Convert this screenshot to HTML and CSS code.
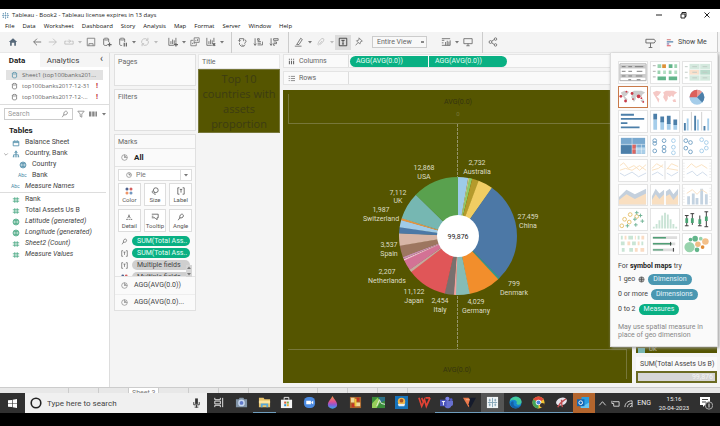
FILE: index.html
```html
<!DOCTYPE html>
<html lang="en">
<head>
<meta charset="utf-8">
<title>Tableau - Book2</title>
<link rel="stylesheet" href="styles.css">
</head>
<body>
<svg class="defs" aria-hidden="true">
  <symbol id="db" viewBox="0 0 10 10"><path d="M2 2.500C2 .8 8 .8 8 2.500V8C8 9.500 2 9.500 2 8ZM2 2.500C2 4 8 4 8 2.500"/></symbol>
  <symbol id="dbadd" viewBox="0 0 12 12"><path d="M2 2.500C2 1 8 1 8 2.500V6M2 2.500V9C2 10 4 10.500 6 10M2 2.500C2 4 8 4 8 2.500"/><path d="M9 6.500V11.500M6.500 9H11.500" stroke-width="1.500"/></symbol>
  <symbol id="dbpause" viewBox="0 0 12 12"><path d="M2 2.500C2 1 8 1 8 2.500V6M2 2.500V9C2 10 4 10.500 5 10M2 2.500C2 4 8 4 8 2.500"/><path d="M7.500 7V11.500M10 7V11.500" stroke-width="1.500"/></symbol>
  <symbol id="pie" viewBox="0 0 10 10"><circle cx="5" cy="5" r="4"/><path d="M5 1V5H9M5 5L7.500 2.500"/></symbol>
  <symbol id="T" viewBox="0 0 10 10"><path d="M3 1H1V9H3M7 1H9V9H7M3.500 3H6.500M5 3V7"/></symbol>
  <symbol id="angle" viewBox="0 0 10 10"><path d="M3.500 6.500C2.500 1 8 0 8 3.500C8 6 5 6.500 3.500 6L1.500 9"/></symbol>
  <symbol id="dots" viewBox="0 0 10 10"><g stroke="none"><circle cx="2.500" cy="2.500" r="1.900" fill="#4f628e"/><circle cx="7.500" cy="2.500" r="1.900" fill="#d4605f"/><circle cx="2.500" cy="7.500" r="1.900" fill="#ee9567"/><circle cx="7.500" cy="7.500" r="1.900" fill="#7196c0"/></g></symbol>
  <symbol id="hash" viewBox="0 0 10 10"><path d="M3.500 1.500V8.500M6.500 1.500V8.500M1 3.500H9M1 6.500H9"/></symbol>
  <symbol id="globe" viewBox="0 0 10 10"><circle cx="5" cy="5" r="3.700"/><path d="M1.500 5H8.500M5 1.500V8.500M2.500 3H7.500M2.500 7H7.500"/></symbol>
  <symbol id="caret" viewBox="0 0 6 6"><path d="M1 2H5L3 4.500Z" fill="currentColor" stroke="none"/></symbol>
  <symbol id="chart" viewBox="0 0 12 12"><path d="M1 1V10H7M3.500 5V8.500M5.500 3V8.500M7.500 4V8.500M9.500 1V6"/></symbol>
  <symbol id="map" viewBox="0 0 30 20"><path d="M2 5L6 3L11 4L8 8L6 9L8 11L9 12L8 16L6 12L3 7ZM13 5L16 3L24 3L28 5L25 7L24 10L22 8L20 10L18 8L18 12L16 15L13 10L14 7ZM23 13L26 12L27 15L24 15Z" stroke="none"/></symbol>
</svg>

<div class="letterbox top"></div>
<header class="titlebar">
  <svg class="ic logo" viewBox="0 0 10 10"><path d="M5 0V3M5 7V10M0 5H3M7 5H10M2 1.500V3.500M8 1.500V3.500M2 6.500V8.500M8 6.500V8.500M1 2.500H3M7 2.500H9M1 7.500H3M7 7.500H9M3.500 5H6.500M5 3.500V6.500"/></svg>
  <h1>Tableau - Book2 - Tableau license expires in 13 days</h1>
  <div class="winbtns">
    <button aria-label="Minimize"><svg class="ic" viewBox="0 0 8 8"><path d="M1 4H7"/></svg></button>
    <button aria-label="Restore"><svg class="ic" viewBox="0 0 8 8"><path d="M2 3H6V7H2ZM3 3V1.500H7V5.500H6"/></svg></button>
    <button aria-label="Close"><svg class="ic" viewBox="0 0 8 8"><path d="M1.500 1.500L6.500 6.500M6.500 1.500L1.500 6.500"/></svg></button>
  </div>
</header>
<nav class="menu">
  <a href="#">File</a><a href="#">Data</a><a href="#">Worksheet</a><a href="#">Dashboard</a><a href="#">Story</a><a href="#">Analysis</a><a href="#">Map</a><a href="#">Format</a><a href="#">Server</a><a href="#">Window</a><a href="#">Help</a>
</nav>

<div class="toolbar">
  <div class="group first">
    <button aria-label="Home"><svg class="ic home" viewBox="0 0 12 12"><path d="M1 6L6 1.500L11 6H9.500V10.500H7.500V7H4.500V10.500H2.500V6Z"/></svg></button>
  </div>
  <div class="group">
    <button aria-label="Undo"><svg class="ic dark" viewBox="0 0 12 12"><path d="M11 6H2M6 2L2 6L6 10"/></svg></button>
    <button aria-label="Redo"><svg class="ic faint" viewBox="0 0 12 12"><path d="M1 6H10M6 2L10 6L6 10"/></svg></button>
    <button aria-label="Replay"><svg class="ic faint" viewBox="0 0 12 12"><path d="M3 5H1V8.500H11V5H9M4 5H8M6 3L8 5L6 7"/></svg></button>
    <svg class="caret faint"><use href="#caret"/></svg>
    <button aria-label="Save"><svg class="ic" viewBox="0 0 12 12"><path d="M1.500 1.500H10.500V10.500H1.500ZM3.500 10.500V8H8.500V10.500"/></svg></button>
    <button aria-label="New data source"><svg class="ic dark"><use href="#dbadd"/></svg></button>
    <button aria-label="Pause updates"><svg class="ic dark"><use href="#dbpause"/></svg></button>
    <svg class="caret"><use href="#caret"/></svg>
    <button aria-label="Refresh"><svg class="ic faint" viewBox="0 0 12 12"><path d="M2 7A4 4 0 0 1 9 3.500M10 5A4 4 0 0 1 3 8.500M9.500 1V4H7M2.500 11V8H5"/></svg></button>
    <svg class="caret faint"><use href="#caret"/></svg>
  </div>
  <div class="group">
    <button aria-label="New worksheet"><svg class="ic dark" viewBox="0 0 12 12"><use href="#chart" width="12" height="12"/><path d="M9.500 6.500V11.500M7 9H12" stroke-width="1.500"/></svg></button>
    <svg class="caret"><use href="#caret"/></svg>
    <button aria-label="Duplicate"><svg class="ic" viewBox="0 0 12 12"><path d="M5 1H11V6.500H5ZM4 4H1V10.500H7.500V7.500M3 8.500V7M5 8.500V6M7 5V3.500M9 5V2.500"/></svg></button>
    <button aria-label="Clear sheet"><svg class="ic dark" viewBox="0 0 12 12"><use href="#chart" width="12" height="12"/><path d="M8 7.500L11 10.500M11 7.500L8 10.500" stroke-width="1.500"/></svg></button>
    <svg class="caret"><use href="#caret"/></svg>
  </div>
  <div class="group ruled">
    <button aria-label="Swap"><svg class="ic dark" viewBox="0 0 12 12"><path d="M3 2H8V5M3 2V5M1.500 4L3 5.500L4.500 4M9.500 3L11 5L9 8M3 7V9L5 11H8L10 9M6 9L8 11"/></svg></button>
    <button aria-label="Sort ascending"><svg class="ic dark" viewBox="0 0 12 12"><path d="M2.500 1.500V10M1 8L2.500 10L4 8M5.500 2H7.500V4H5.500ZM5.500 5.500H9.500M5.500 7.500H9.500M5.500 9.500H11.500V5.500"/></svg></button>
    <button aria-label="Sort descending"><svg class="ic dark" viewBox="0 0 12 12"><path d="M2.500 1.500V10M1 8L2.500 10L4 8M5.500 2H11V4H5.500ZM5.500 6H9V8H5.500V10H7"/></svg></button>
  </div>
  <div class="group ruled">
    <button aria-label="Highlight"><svg class="ic dark" viewBox="0 0 12 12"><path d="M1 11H9M4 8L8 1.500L10 3L6 9H4ZM3 9.500L4 8"/></svg></button>
    <svg class="caret"><use href="#caret"/></svg>
    <button aria-label="Group"><svg class="ic faint" viewBox="0 0 12 12"><path d="M3 10C1 8 5 3 7 2C10 1 10 4 8 6L5 9C4 9 4 8 7 5"/></svg></button>
    <svg class="caret faint"><use href="#caret"/></svg>
    <button class="on" aria-label="Show labels"><svg class="ic" viewBox="0 0 12 12"><path d="M1.500 1.500H10.500V10.500H1.500ZM4 4H8M6 4V8.500M5 8.500H7"/></svg></button>
    <button aria-label="Fix axes"><svg class="ic" viewBox="0 0 12 12"><path d="M6 1L10 5L8 5.500L7 8.500L3 4.500L6 3.500ZM5 6.500L2 10"/></svg></button>
  </div>
  <select class="fit" aria-label="Fit"><option>Entire View</option></select>
  <div class="group">
    <button aria-label="Show cards"><svg class="ic dark" viewBox="0 0 12 12"><path d="M1 2H11M1 4H4M1 7H3M1 10H11V4M5.500 10V6M7.500 10V4.500M9.500 10V5.500"/></svg></button>
    <svg class="caret"><use href="#caret"/></svg>
    <button aria-label="Presentation mode"><svg class="ic dark" viewBox="0 0 12 12"><path d="M1 2H11V8H1ZM6 8V10.500M4 10.500H8"/></svg></button>
  </div>
  <div class="group ruled">
    <button aria-label="Share"><svg class="ic dark" viewBox="0 0 12 12"><circle cx="3" cy="6" r="1.700"/><circle cx="9" cy="2.500" r="1.500"/><circle cx="9" cy="9.500" r="1.500"/><path d="M4.500 5L7.500 3M4.500 7L7.500 9"/></svg></button>
  </div>
  <button class="guide" aria-label="Data guide"><svg class="ic dark" viewBox="0 0 12 12"><path d="M1 2.500H10L11.500 4.500L10 6.500H1ZM6 6.500V11.500M4 11.500H8"/></svg></button>
  <button class="showme-tab"><svg class="bars" viewBox="0 0 10 10"><path d="M1 1.500H6" stroke="#d98a8a"/><path d="M1 4.200H9" stroke="#4c7ea8"/><path d="M1 6.800H4" stroke="#8b74a8"/><path d="M1 9H6" stroke="#e07078"/></svg>Show Me</button>
</div>

<main class="work">
  <aside class="data">
    <div class="tabs"><button class="active">Data</button><button>Analytics</button><span>‹</span></div>
    <ul class="sources">
      <li class="sel"><svg class="ic blue"><use href="#db"/></svg><span>Sheet1 (top100banks201...</span></li>
      <li><svg class="ic"><use href="#db"/></svg><span>top100banks2017-12-31</span><b>!</b></li>
      <li><svg class="ic"><use href="#db"/></svg><span>top100banks2017-12-...</span><b>!</b></li>
    </ul>
    <div class="search">
      <label><input type="text" placeholder="Search" aria-label="Search"><svg class="ic"><use href="#angle"/></svg></label>
      <svg class="ic" viewBox="0 0 10 10"><path d="M1 1.500H9L6 5V9L4 8V5Z"/></svg>
      <svg class="ic grid" viewBox="0 0 10 10"><path d="M0 3.500H10M0 6.500H10"/></svg>
      <svg class="caret"><use href="#caret"/></svg>
    </div>
    <h2>Tables</h2>
    <ul class="fields blue">
      <li><svg class="ic" viewBox="0 0 10 10"><path d="M1.500 3H8.500V8.500H1.500ZM1.500 4.500H8.500M3.500 1.500V3M6.500 1.500V3"/></svg>Balance Sheet</li>
      <li class="open"><svg class="ic chev" viewBox="0 0 10 10"><path d="M2 4L5 7L8 4"/></svg><svg class="ic" viewBox="0 0 10 10"><path d="M5 1L6.500 3.500H3.500ZM5 3.500V6M2 8.500V6H8V8.500M1 8.500H3M4 8.500H6M7 8.500H9M5 6V8"/></svg>Country, Bank</li>
      <li class="child"><svg class="ic"><use href="#globe"/></svg>Country</li>
      <li class="child"><em>Abc</em>Bank</li>
      <li class="it"><em>Abc</em>Measure Names</li>
    </ul>
    <ul class="fields green">
      <li><svg class="ic"><use href="#hash"/></svg>Rank</li>
      <li><svg class="ic"><use href="#hash"/></svg>Total Assets Us B</li>
      <li class="it"><svg class="ic"><use href="#globe"/></svg>Latitude (generated)</li>
      <li class="it"><svg class="ic"><use href="#globe"/></svg>Longitude (generated)</li>
      <li class="it"><svg class="ic"><use href="#hash"/></svg>Sheet2 (Count)</li>
      <li class="it"><svg class="ic"><use href="#hash"/></svg>Measure Values</li>
    </ul>
  </aside>

  <section class="cards">
    <div class="card pages"><h3>Pages</h3></div>
    <div class="card filters"><h3>Filters</h3></div>
    <div class="card marks">
      <h3>Marks</h3>
      <div class="all"><svg class="ic"><use href="#pie"/></svg>All</div>
      <div class="type"><svg class="ic"><use href="#pie"/></svg><select aria-label="Mark type"><option>Pie</option></select><svg class="caret"><use href="#caret"/></svg></div>
      <div class="props">
        <button><svg class="ic"><use href="#dots"/></svg>Color</button>
        <button><svg class="ic" viewBox="0 0 10 10"><circle cx="6" cy="4" r="3"/><path d="M3 4C0 6 2 9 5 7M4 9H6"/></svg>Size</button>
        <button><svg class="ic"><use href="#T"/></svg>Label</button>
        <button><svg class="ic" viewBox="0 0 10 10"><path d="M5 2V4M4 4H6M1.500 8H3.500M4.500 8H6M7 8H9M3 6L5 4.500L7 6"/></svg>Detail</button>
        <button><svg class="ic" viewBox="0 0 10 10"><path d="M1 1.500H9V6H7.500V8.500L5 6H1M1 4H3"/></svg>Tooltip</button>
        <button><svg class="ic"><use href="#angle"/></svg>Angle</button>
      </div>
      <ul class="pills">
        <li><svg class="ic"><use href="#angle"/></svg><span>SUM(Total Ass..</span></li>
        <li><svg class="ic"><use href="#T"/></svg><span>SUM(Total Ass..</span></li>
        <li class="gray"><svg class="ic"><use href="#T"/></svg><span>Multiple fields</span></li>
        <li class="gray"><svg class="ic"><use href="#dots"/></svg><span>Multiple fields</span></li>
      </ul>
      <div class="agg"><svg class="ic"><use href="#pie"/></svg>AGG(AVG(0.0))</div>
      <div class="agg"><svg class="ic"><use href="#pie"/></svg>AGG(AVG(0.0)...</div>
      <div class="spin"><svg class="caret up"><use href="#caret"/></svg><svg class="caret"><use href="#caret"/></svg></div>
    </div>
  </section>

  <section class="title-card">
    <h3>Title</h3>
    <p>Top 10<br>countries with<br>assets<br>proportion</p>
  </section>

  <section class="view">
    <div class="shelf"><h3><svg class="ic" viewBox="0 0 10 10"><path d="M2 1V2.500M5 1V2.500M8 1V2.500M2 4V9M5 4V9M8 4V9" stroke-width="1.500"/></svg>Columns</h3><span class="pill round">AGG(AVG(0.0))</span><span class="pill end">AGG(AVG(0.0))</span></div>
    <div class="shelf"><h3><svg class="ic" viewBox="0 0 10 10"><path d="M1 2H2.500M1 5H2.500M1 8H2.500M4 2H10M4 5H10M4 8H10"/></svg>Rows</h3></div>
    <div class="viz">
      <div class="axis"><span>AVG(0.0)</span><small>0</small></div>
      <div class="plot">
        <svg viewBox="0 0 220 225" role="img" aria-label="Total assets by country">
          <g class="slices">
            <circle cx="110" cy="112" r="29.500" pathLength="360" stroke="#9dcbe8" stroke-dasharray="10 360"/>
            <circle cx="110" cy="112" r="29.500" pathLength="360" stroke="#d7c78b" stroke-dasharray="1.500 360" stroke-dashoffset="-10"/>
            <circle cx="110" cy="112" r="29.500" pathLength="360" stroke="#8fcb68" stroke-dasharray="3 360" stroke-dashoffset="-11"/>
            <circle cx="110" cy="112" r="29.500" pathLength="360" stroke="#b49a2c" stroke-dasharray="7 360" stroke-dashoffset="-14"/>
            <circle cx="110" cy="112" r="29.500" pathLength="360" stroke="#f0cd63" stroke-dasharray="15 360" stroke-dashoffset="-20.500"/>
            <circle cx="110" cy="112" r="29.500" pathLength="360" stroke="#4c78a6" stroke-dasharray="100.500 360" stroke-dashoffset="-35"/>
            <circle cx="110" cy="112" r="29.500" pathLength="360" stroke="#35968b" stroke-dasharray="2.500 360" stroke-dashoffset="-135"/>
            <circle cx="110" cy="112" r="29.500" pathLength="360" stroke="#f28e2c" stroke-dasharray="32 360" stroke-dashoffset="-137"/>
            <circle cx="110" cy="112" r="29.500" pathLength="360" stroke="#86bcb6" stroke-dasharray="14 360" stroke-dashoffset="-168.500"/>
            <circle cx="110" cy="112" r="29.500" pathLength="360" stroke="#f2a09c" stroke-dasharray="2.500 360" stroke-dashoffset="-182"/>
            <circle cx="110" cy="112" r="29.500" pathLength="360" stroke="#79706e" stroke-dasharray="9.500 360" stroke-dashoffset="-184"/>
            <circle cx="110" cy="112" r="29.500" pathLength="360" stroke="#e05658" stroke-dasharray="40 360" stroke-dashoffset="-193"/>
            <circle cx="110" cy="112" r="29.500" pathLength="360" stroke="#c6a99d" stroke-dasharray="3 360" stroke-dashoffset="-232.500"/>
            <circle cx="110" cy="112" r="29.500" pathLength="360" stroke="#d37295" stroke-dasharray="11 360" stroke-dashoffset="-235"/>
            <circle cx="110" cy="112" r="29.500" pathLength="360" stroke="#f3bfd2" stroke-dasharray="1.500 360" stroke-dashoffset="-245.500"/>
            <circle cx="110" cy="112" r="29.500" pathLength="360" stroke="#c98fb4" stroke-dasharray="2.500 360" stroke-dashoffset="-247"/>
            <circle cx="110" cy="112" r="29.500" pathLength="360" stroke="#9d7660" stroke-dasharray="12 360" stroke-dashoffset="-249"/>
            <circle cx="110" cy="112" r="29.500" pathLength="360" stroke="#d7b5a6" stroke-dasharray="12.500 360" stroke-dashoffset="-260.500"/>
            <circle cx="110" cy="112" r="29.500" pathLength="360" stroke="#4c78a6" stroke-dasharray="6.500 360" stroke-dashoffset="-272.500"/>
            <circle cx="110" cy="112" r="29.500" pathLength="360" stroke="#a0cbe8" stroke-dasharray="7.500 360" stroke-dashoffset="-278.500"/>
            <circle cx="110" cy="112" r="29.500" pathLength="360" stroke="#e49440" stroke-dasharray="2.500 360" stroke-dashoffset="-285.500"/>
            <circle cx="110" cy="112" r="29.500" pathLength="360" stroke="#76b7b2" stroke-dasharray="27 360" stroke-dashoffset="-287.500"/>
            <circle cx="110" cy="112" r="29.500" pathLength="360" stroke="#59a14e" stroke-dasharray="45.700 360" stroke-dashoffset="-314.300"/>
          </g>
          <circle cx="110" cy="112" r="21" fill="#fff"/>
          <g class="labels">
            <text x="76" y="46">12,868</text><text x="76" y="55">USA</text>
            <text x="129" y="41">2,732</text><text x="129" y="50">Australia</text>
            <text x="50" y="71">7,112</text><text x="50" y="79">UK</text>
            <text x="33" y="88">1,987</text><text x="33" y="97">Switzerland</text>
            <text x="41" y="123">3,537</text><text x="41" y="132">Spain</text>
            <text x="39" y="150">2,207</text><text x="39" y="159">Netherlands</text>
            <text x="66" y="170">11,122</text><text x="66" y="179">Japan</text>
            <text x="92" y="179">2,454</text><text x="92" y="188">Italy</text>
            <text x="128" y="180">4,029</text><text x="128" y="189">Germany</text>
            <text x="166" y="162">799</text><text x="166" y="171">Denmark</text>
            <text x="180" y="95">27,459</text><text x="180" y="104">China</text>
            <text class="total" x="110" y="115">99,876</text>
          </g>
        </svg>
      </div>
      <div class="axis low"><span>AVG(0.0)</span></div>
    </div>
  </section>

  <aside class="legend">
    <div class="keys"><span></span>UK</div>
    <div class="sum"><h3>SUM(Total Assets Us B)</h3><div>99,876</div></div>
  </aside>

  <section class="showme">
    <div class="thumbs">
      <button aria-label="Text table"><svg viewBox="0 0 30 20"><path d="M1 1H29V19H1Z" fill="#fff" stroke="#aaa"/><path d="M1 4H29M1 14H29" stroke="#ccc" stroke-width="4"/><path d="M3 4H7M10 4H14M17 4H26M3 9H7M10 9H14M19 9H25M3 14H7M10 14H14M18 14H25M10 18H13M19 18H23" stroke="#777"/></svg></button>
      <button aria-label="Heat map"><svg viewBox="0 0 30 20"><path d="M2 3H5M2 9H5M2 15H5" stroke="#aaa"/><path d="M7 3.500H11M25 3.500H28M19 10H22M7 10H10" stroke="#9bd3b0" stroke-width="4"/><path d="M12 3.500H16" stroke="#dd9138" stroke-width="4"/><path d="M19 3.500H23M7 16.500H16M19 16.500H28" stroke="#62b58a" stroke-width="4"/><path d="M13 10H16M25 10H28" stroke="#b4dfc4" stroke-width="4"/></svg></button>
      <button aria-label="Highlight table"><svg viewBox="0 0 30 20"><path d="M7 1H29V19H7Z" fill="#d4e9de"/><path d="M7 7H17V13H7Z" fill="#fae0cb"/><path d="M18 7H29V13H18Z" fill="#b9dbcc"/><path d="M7 7H29M7 13H29M18 1V19" stroke="#eef6f2"/><path d="M2 4H5M2 10H5M2 16H5M10 4H15M21 4H26M10 10H15M21 10H26M10 16H15M21 16H26" stroke="#bfcac4"/></svg></button>
      <button class="picked" aria-label="Symbol map"><svg viewBox="0 0 30 20"><use href="#map" fill="#ccc"/><g fill="#c93b49"><circle cx="2" cy="9" r="1.500"/><circle cx="8" cy="4" r="1"/><circle cx="7" cy="14" r="1.500"/><circle cx="14" cy="6" r="1.500"/><circle cx="21" cy="9" r="2"/><circle cx="24" cy="11" r="1"/><circle cx="26" cy="15" r="1"/><circle cx="15" cy="12" r="1"/></g></svg></button>
      <button aria-label="Map"><svg viewBox="0 0 30 20"><use href="#map" fill="#f5c8c5"/></svg></button>
      <button aria-label="Pie chart"><svg viewBox="0 0 30 20"><circle cx="15" cy="10" r="8" fill="#a5cdea"/><path d="M15 10V2A8 8 0 0 1 20.600 4.400Z" fill="#ed9690"/><path d="M15 10L20.600 4.400A8 8 0 0 1 20.600 15.600Z" fill="#4c7fa9"/><path d="M15 10V2A8 8 0 0 0 7 10Z" fill="#dc605b"/></svg></button>
      <button aria-label="Horizontal bars"><svg viewBox="0 0 30 20"><path d="M2 3H16M2 7.500H27M2 12H9M2 16.500H22" stroke="#4c7fa9" stroke-width="2"/></svg></button>
      <button aria-label="Stacked bars"><svg viewBox="0 0 30 20"><path d="M4.500 8V19M12 10V19M19 12V19M26 14V19" stroke="#a5cdea" stroke-width="4"/><path d="M4.500 2V8M12 5V11M19 4V13M26 8V14" stroke="#4c7fa9" stroke-width="4"/></svg></button>
      <button aria-label="Side-by-side bars"><svg viewBox="0 0 30 20"><path d="M9 0V20M20 0V20" stroke="#ccc"/><path d="M2 12V20M13 4V20M23 15V20" stroke="#4c7fa9" stroke-width="2"/><path d="M5 7V20M16 8V20M27 7V20" stroke="#a5cdea" stroke-width="2"/></svg></button>
      <button aria-label="Treemap"><svg viewBox="0 0 30 20"><path d="M2 1H28V18H2Z" fill="#79a9cf"/><path d="M2 9H14V18H2Z" fill="#4c7fa9"/><path d="M14 8H18V18H14Z" fill="#dd655f"/><path d="M18 11H28V18H18Z" fill="#a9cee8"/><path d="M2 8H28M14 1V18M19 8V18M24 8V18M14 13H28" stroke="#fff" stroke-width=".5"/></svg></button>
      <button aria-label="Circle views"><svg viewBox="0 0 30 20" fill="none" stroke="#719fc3"><circle cx="4" cy="4" r="2"/><circle cx="4" cy="7" r="2"/><circle cx="4" cy="15" r="2"/><circle cx="14" cy="4" r="2"/><circle cx="14" cy="11" r="2"/><circle cx="14" cy="15" r="2"/><g stroke="#a5cdea"><circle cx="24" cy="4" r="2"/><circle cx="24" cy="11" r="2"/><circle cx="24" cy="17" r="2"/></g></svg></button>
      <button aria-label="Side-by-side circles"><svg viewBox="0 0 30 20" fill="none" stroke="#719fc3"><circle cx="3" cy="4" r="2"/><circle cx="3" cy="12" r="2"/><circle cx="8" cy="6" r="2"/><circle cx="8" cy="16" r="2"/><g stroke="#a5cdea"><circle cx="20" cy="3" r="2"/><circle cx="25" cy="6" r="2"/><circle cx="20" cy="15" r="2"/><circle cx="25" cy="12" r="2"/></g></svg></button>
      <button aria-label="Continuous lines"><svg viewBox="0 0 30 20" fill="none"><path d="M1 5L5 2L10 8L16 5L22 10L29 4M1 10L7 8L14 10L22 5L29 10" stroke="#fae0bd"/><path d="M1 13L6 16L14 12L21 17L29 13" stroke="#cfdaea"/></svg></button>
      <button aria-label="Discrete lines"><svg viewBox="0 0 30 20" fill="none"><path d="M15 0V20" stroke="#ddd"/><path d="M1 8L6 3L13 7M17 9L22 3L29 6M1 10L8 8L13 4M17 8L29 10" stroke="#fae0bd"/><path d="M1 15L7 12L13 16M17 13L22 16L29 12" stroke="#cfdaea"/></svg></button>
      <button aria-label="Dual lines"><svg viewBox="0 0 30 20" fill="none"><path d="M4 8L9 3L14 7L20 4L26 8" stroke="#fae0bd"/><path d="M4 14L10 11L15 16L21 12L26 16" stroke="#cfdaea"/><path d="M1 2V19M29 2V19" stroke="#ddd" stroke-dasharray="1 2"/></svg></button>
      <button aria-label="Continuous area"><svg viewBox="0 0 30 20"><path d="M0 12L8 4L17 9L29 3V20H0Z" fill="#c4d0dd"/><path d="M0 15L8 9L17 14L29 8V20H0Z" fill="#f9dfc1"/></svg></button>
      <button aria-label="Discrete area"><svg viewBox="0 0 30 20"><path d="M1 11L5 3L9 8L14 4V20H1ZM16 6L20 3L24 9L29 3V20H16Z" fill="#c4d0dd"/><path d="M1 15L5 9L9 14L14 9V20H1ZM16 11L20 9L24 15L29 9V20H16Z" fill="#f9dfc1"/></svg></button>
      <button aria-label="Dual combination"><svg viewBox="0 0 30 20" fill="none"><path d="M6 11V20M11 8V20M15 13V20M20 3V20M25 9V20" stroke="#c4d3e1" stroke-width="3"/><path d="M4 8L10 4L15 9L20 4L26 8" stroke="#f9dfc1"/><path d="M1 2V19M29 2V19" stroke="#ddd" stroke-dasharray="1 2"/></svg></button>
      <button aria-label="Scatter plot"><svg viewBox="0 0 30 20" fill="none"><g stroke="#e6c06a"><circle cx="3" cy="17" r="2"/><circle cx="6" cy="10" r="2"/><circle cx="11" cy="13" r="2"/><circle cx="12" cy="5" r="2"/><circle cx="19" cy="7" r="2"/></g><path d="M19 1V5M17 3H21M17 8V12M15 10H19M25 10V14M23 12H27M9 15V19M7 17H11M18 14V18M16 16H20M23 4V8M21 6H25" stroke="#6fb395"/></svg></button>
      <button aria-label="Histogram"><svg viewBox="0 0 30 20"><path d="M3 18V20M6 15V20M9 11V20M12 6V20M15 3V20M18 5V20M21 10V20M24 15V20M27 18V20" stroke="#c9e3d5" stroke-width="2"/></svg></button>
      <button aria-label="Box plot"><svg viewBox="0 0 30 20"><path d="M4 6V17M10 4V16M18 6V17M25 2V18M2 6H6M2 17H6M8 4H12M16 17H20M23 2H27M23 18H27" stroke="#333"/><path d="M4 9V14M10 9V14M18 10V15M25 7V12" stroke="#4aa373" stroke-width="3"/></svg></button>
      <button aria-label="Gantt"><svg viewBox="0 0 30 20"><path d="M2 3H4M10 3H15M20 3H22M2 9H6M14 9H18M24 9H26M3 16H6M11 16H15" stroke="#c9e5d5" stroke-width="4"/><path d="M6 3H8M17 3H18M24 3H27M9 9H12M20 9H22M17 16H20M23 16H27" stroke="#fadcc4" stroke-width="4"/></svg></button>
      <button aria-label="Bullet graph"><svg viewBox="0 0 30 20"><path d="M2 3H28M2 9.500H26M2 16H25" stroke="#ddd" stroke-width="3"/><path d="M2 3H16M2 9.500H22M2 16H13" stroke="#4f9e75" stroke-width="1.500"/><path d="M21 7.500V11.500M24 14V18" stroke="#333"/></svg></button>
      <button aria-label="Packed bubbles"><svg viewBox="0 0 30 20"><circle cx="7" cy="13" r="5.500" fill="#98d3ad"/><circle cx="13" cy="4" r="3" fill="#62b58a"/><circle cx="8" cy="5" r="2" fill="#62b58a"/><circle cx="16" cy="10" r="3" fill="#f0bd85"/><circle cx="24" cy="7" r="3.500" fill="#f3c08a"/><circle cx="15" cy="16" r="2.500" fill="#62b58a"/><circle cx="21" cy="13" r="2" fill="#e28c36"/><circle cx="19" cy="4" r="2" fill="#98d3ad"/></svg></button>
    </div>
    <p class="try">For <b>symbol maps</b> try</p>
    <p class="need">1 geo <svg class="ic"><use href="#globe"/></svg><span class="dim">Dimension</span></p>
    <p class="need">0 or more <span class="dim">Dimensions</span></p>
    <p class="need">0 to 2 <span class="dim mea">Measures</span></p>
    <p class="note">May use spatial measure in<br>place of geo dimension</p>
  </section>
</main>

<div class="sheets"><span class="wide"></span><span></span><span></span><span class="cur">Sheet 3</span><span></span><span></span><span></span><span class="wide"></span><span></span><span></span><span></span></div>

<footer class="taskbar">
  <button class="start" aria-label="Start"><svg viewBox="0 0 10 10"><path d="M0 1.500L4.500 1V4.600H0ZM5.200 .9L10 0V4.600H5.200ZM0 5.400H4.500V9L0 8.500ZM5.200 5.400H10V10L5.200 9.100Z" fill="#fff"/></svg></button>
  <label class="find"><svg viewBox="0 0 12 12"><circle cx="6" cy="6" r="4.800" fill="none" stroke="#222" stroke-width="1.600"/></svg><input type="text" placeholder="Type here to search" aria-label="Type here to search"><svg class="mic" viewBox="0 0 12 12"><path d="M4.500 1H7.500V7H4.500Z" fill="#333"/><path d="M3 5V8H9V5M6 8V11M4 10.500H8" fill="none" stroke="#333"/></svg></label>
  <div class="apps">
    <button aria-label="Task view"><svg viewBox="0 0 14 14"><path d="M3 2V4H9V2M3 12V10H9V12M3 5.500H9V8.500H3ZM11.500 2V12" fill="none" stroke="#eee"/></svg></button>
    <button aria-label="Camera"><svg viewBox="0 0 14 14"><path d="M1 3.500H4L5 2H9L10 3.500H13V12H1Z" fill="#8193a6"/><circle cx="7" cy="7.500" r="3.600" fill="#c6d7ef"/><circle cx="7" cy="7.500" r="2" fill="#6079ca"/></svg></button>
    <button class="run" aria-label="Explorer"><svg viewBox="0 0 14 14"><path d="M1 2H6L7 3.500H13V12H1Z" fill="#e9c46b"/><path d="M1 5H13V8H1Z" fill="#fbe5a0"/><path d="M3 12V8H11V12H9V10H5V12Z" fill="#57a7d8"/></svg></button>
    <button aria-label="Store"><svg viewBox="0 0 14 14"><path d="M1 4H13V13H1Z" fill="#f4f4f4"/><path d="M4.500 4V1.500H9.500V4" fill="none" stroke="#eee"/><path d="M4.500 6H6.700V8.200H4.500Z" fill="#d75a38"/><path d="M7.300 6H9.500V8.200H7.300Z" fill="#79ad43"/><path d="M4.500 8.800H6.700V11H4.500Z" fill="#2c98cf"/><path d="M7.300 8.800H9.500V11H7.300Z" fill="#e7ae36"/></svg></button>
    <button aria-label="Zoom"><svg viewBox="0 0 14 14"><rect x="1" y="1" width="12" height="12" rx="5" fill="#4b8ae0"/><path d="M3.500 5H8.500V9H3.500ZM9 6.500L11 5V9L9 7.500Z" fill="#fff"/></svg></button>
    <button aria-label="Paint"><svg viewBox="0 0 14 14"><defs><linearGradient id="drop" x1="0" y1="0" x2="0" y2="1"><stop offset="0" stop-color="#f09a46"/><stop offset=".45" stop-color="#dd4f92"/><stop offset=".7" stop-color="#875bd6"/><stop offset="1" stop-color="#38a6e8"/></linearGradient></defs><path d="M7 0C9 4 12 6 12 9.500C12 15 2 15 2 9.500C2 6 5 4 7 0Z" fill="url(#drop)"/></svg></button>
    <button aria-label="Game"><svg viewBox="0 0 14 14"><path d="M1 1H13V13H1Z" fill="#a9652c"/><path d="M2 2H6V7H2ZM7 7H12V11H7Z" fill="#eed79a"/><path d="M8 2H11V6H8ZM3 8H6V12H3Z" fill="#c33325"/><path d="M6 3H8V11H6Z" fill="#f2c636"/></svg></button>
    <button aria-label="Photos"><svg viewBox="0 0 14 14"><path d="M0 1H14V13H0Z" fill="#3b8d3b"/><path d="M0 8L6 2L9 6L5 13H0Z" fill="#97cf5a"/><path d="M7 1H14V5L9 7Z" fill="#2e7187"/><path d="M5 11L8 4L10 8L14 9" fill="none" stroke="#e4f1e4"/></svg></button>
    <button aria-label="Media"><svg viewBox="0 0 14 14"><path d="M0 0H14V14H0Z" fill="#1673bb"/><circle cx="7" cy="6" r="4" fill="#efb74b"/><circle cx="7" cy="5" r="2" fill="#a85125"/><path d="M3 9C5 7 7 10 11 8L10 11H4Z" fill="#e1eef6"/></svg></button>
    <button aria-label="WPS"><svg viewBox="0 0 14 14"><path d="M1 2L4 11L7 4L9 11L13 2M4 2L6 7M8 2H13" fill="none" stroke="#e24335" stroke-width="1.800"/></svg></button>
    <button class="run" aria-label="Teams"><svg viewBox="0 0 14 14"><circle cx="8" cy="3" r="2.300" fill="#7b83eb"/><circle cx="12" cy="4" r="1.500" fill="#5059c9"/><path d="M5 5H14V9C14 11 12 11 12 11C11 14 6 14 5 11Z" fill="#6870cf"/><path d="M0 4H7V11H0Z" fill="#4b53bc"/><path d="M2 6H5.500M3.700 6V10" stroke="#fff"/></svg></button>
    <button class="run" aria-label="Video editor"><svg viewBox="0 0 14 14"><path d="M0 2H6L9 6L6 12Z" fill="#ec794a"/><path d="M8 2H14L8 13L6 9Z" fill="#151b2c"/><path d="M3 4H7" stroke="#f7b28c"/></svg></button>
    <button class="focus" aria-label="Tableau"><svg viewBox="0 0 14 14"><path d="M1 1H13V13H1Z" fill="#f1f5f7"/><path d="M7 2V12M2 7H12M4 3V6M10 3V6M4 8V11M10 8V11M3 4.500H5M9 4.500H11M3 9.500H5M9 9.500H11" stroke="#85a5b8"/></svg></button>
    <button class="run" aria-label="Edge"><svg viewBox="0 0 14 14"><circle cx="7" cy="7" r="6.500" fill="#1786d1"/><path d="M.7 6C2 -1 13 -1 13.500 6C13.500 10 9 10 8 8C10 5 4 2 .7 6Z" fill="#46cc9b"/><path d="M5 7C4 11 9 13 12.500 10.500C10 15 2 14 1.500 8C3 5 5 5 5 7Z" fill="#1562a8"/></svg></button>
    <button class="run" aria-label="Chrome"><svg viewBox="0 0 14 14"><circle cx="7" cy="7" r="6.500" fill="#f2c432"/><path d="M7 7L1.400 3.700A6.500 6.500 0 0 1 12.600 3.700Z" fill="#df493c"/><path d="M7 7L1.400 3.700A6.500 6.500 0 0 0 7 13.500Z" fill="#43a35a"/><circle cx="7" cy="7" r="3" fill="#fff"/><circle cx="7" cy="7" r="2.200" fill="#4b83dc"/><circle cx="11" cy="10" r="2.500" fill="#3b3029"/></svg></button>
    <button class="run" aria-label="Snipping tool"><svg viewBox="0 0 14 14"><ellipse cx="7" cy="6" rx="6" ry="4" fill="#e6e4ec" transform="rotate(-20 7 6)"/><path d="M3 12C5 7 8 6 12 3M8 12C7 9 7 6 7 4" fill="none" stroke="#c04d50" stroke-width="1.500"/></svg></button>
    <button class="alert" aria-label="Outlook"><svg viewBox="0 0 14 14"><path d="M5 1H13V13H4V10Z" fill="#2a9de0"/><path d="M4 7L8 10L13 7V13H4Z" fill="#65c5f2"/><path d="M0 3.500H8V11H0Z" fill="#1267b4"/><circle cx="4" cy="7.200" r="2" fill="none" stroke="#fff"/></svg></button>
  </div>
  <div class="tray">
    <svg viewBox="0 0 10 10"><path d="M1.500 7L5 3L8.500 7"/></svg>
    <svg viewBox="0 0 10 10"><path d="M2 3H9V8H3V5M1 2V5H3"/></svg>
    <svg viewBox="0 0 10 10"><path d="M1 9C1 5 4 2 9 2V9M4 9C4 6 6 5 9 5M6.500 9L9 7"/></svg>
    <span>ENG</span>
  </div>
  <time><span>15:16</span><span>20-04-2023</span></time>
  <button class="notes" aria-label="Notifications"><svg viewBox="0 0 14 14"><path d="M1 1H11V9H6L4 11V9H1Z" fill="#fff"/><path d="M3 3.500H9M3 6H7" stroke="#444"/><circle cx="10" cy="9.500" r="3.700" fill="#333" stroke="#aaa"/><path d="M10 7.500V11.500" stroke="#eee"/></svg></button>
</footer>
<div class="letterbox"></div>
</body>
</html>
```
FILE: styles.css
```css
* { box-sizing: border-box; }
body {
  margin: 0; min-height: 100vh; display: flex; flex-direction: column;
  font: 7px/11px Roboto, "Liberation Sans", sans-serif; color: #444; background: #f4f4f4; overflow: hidden;
}
h1, h2, h3, p, ul { margin: 0; padding: 0; font-size: inherit; font-weight: 400; list-style: none; }
button, select, input { font: inherit; color: inherit; background: none; border: 0; padding: 0; margin: 0; min-width: 0; border-radius: 0; }
select { appearance: none; }
a { color: inherit; text-decoration: none; }
.defs { position: absolute; width: 0; height: 0; }
.ic { width: 10px; height: 10px; flex: none; fill: none; stroke: currentColor; stroke-width: 1; display: block; }
.caret { width: 6px; height: 6px; flex: none; color: #777; display: block; }
.letterbox { height: 13px; background: #000; flex: none; }
.letterbox.top { height: 9px; }

.titlebar { height: 12px; background: #fff; display: flex; align-items: center; padding: 0 9px 0 0; font: 6px/12px "Open Sans", sans-serif; color: #222; }
.logo { width: 7px; height: 7px; color: #5b8fb0; margin: 0 3px 0 2px; }
.winbtns { margin-left: auto; display: flex; gap: 16px; color: #222; }
.winbtns .ic { width: 8px; height: 8px; }
.menu { height: 11px; background: #fff; display: flex; gap: 8px; padding-left: 5px; font: 6px/11px "Open Sans", sans-serif; color: #111; }

.toolbar { height: 21px; background: #f4f4f4; display: flex; align-items: center; border-bottom: 1px solid #e8e8e8; color: #777; }
.group { display: flex; align-items: center; height: 21px; margin-left: 6px; }
.group.first { margin-left: 5px; margin-right: 2px; }
.group.ruled { border-left: 1px solid #ccc; padding-left: 2px; }
.group button { width: 16px; height: 15px; display: grid; place-items: center; }
.group button.on { background: #dcdcdc; color: #333; }
.home { fill: #57697a; stroke: none; }
.dark { color: #666; }
.faint { color: #bbb; }
.fit { width: 55px; height: 12px; margin: 0 5px; padding-left: 4px; border: 1px solid #ccc; background: linear-gradient(#888, #888) 48px 4px / 3px 2px no-repeat #f8f8f8; color: #666; }
.guide { margin-left: auto; padding-right: 4px; }
.guide .ic { width: 11px; height: 11px; }
.showme-tab { align-self: flex-end; height: 20px; width: 58px; margin-right: 2px; background: #fafafa; border-right: 1px solid #ccc; display: flex; align-items: center; gap: 4px; padding-left: 6px; color: #444; }
.bars { width: 8px; height: 9px; stroke-width: 1.5; }

.work { position: relative; flex: 1; display: flex; min-height: 334px; }
.data { width: 110px; background: #fff; border-right: 1px solid #ddd; flex: none; }
.tabs { display: flex; height: 14px; }
.tabs button { width: 40px; font-size: 8px; }
.tabs button.active { font-weight: 700; color: #222; padding-right: 6px; }
.tabs button + button { flex: 1; background: #f5f5f5; padding-right: 14px; }
.tabs span { background: #f5f5f5; width: 9px; font-size: 10px; line-height: 12px; }
.sources { padding: 3px 6px 3px 6px; border-bottom: 1px solid #ddd; height: 38px; }
.sources li { display: flex; align-items: center; gap: 4px; height: 10px; padding-left: 5px; white-space: nowrap; color: #666; font: 6px/10px "Open Sans", sans-serif; }
.sources li + li { margin-top: 1px; }
.sources .ic { width: 7px; height: 8px; }
.sources span { width: 70px; }
.sources li.sel span { width: auto; }
.sources b { color: #c0303a; font-size: 7px; }
.sources li.sel { background: #e2e2e2; }
.search { display: flex; align-items: center; gap: 4px; padding: 3px 4px; }
.search label { display: flex; align-items: center; width: 69px; height: 12px; border: 1px solid #ccc; padding: 0 3px; }
.search input { flex: 1; }
.search .ic { width: 8px; height: 8px; color: #888; }
.search .grid { stroke-width: 3; stroke-dasharray: 3 1; }
input::placeholder { color: #999; opacity: 1; }
.data h2 { font-weight: 700; font-size: 8px; padding: 2px 0 0 9px; color: #222; height: 14px; }
.fields li { display: flex; align-items: center; gap: 5px; height: 11px; padding-left: 12px; color: #444; white-space: nowrap; }
.fields .ic { width: 8px; height: 8px; }
.fields em { width: 10px; font-size: 5px; font-style: normal; margin: 0 -1px; color: #4688a4; }
.fields.blue { border-bottom: 1px solid #ddd; margin: 0 3px 0 0; }
.fields.blue .ic { color: #4688a4; }
.fields.green .ic { color: #3fa37c; }
.fields.green { padding-top: 1px; }
.fields .it { font-style: italic; }
.fields li.child { padding-left: 19px; }
.fields li.open { padding-left: 3px; }
.fields .ic.chev { width: 6px; color: #777; margin-right: -2px; }
.blue { color: #4688a4; }

.cards { width: 82px; margin-left: 4px; flex: none; display: flex; flex-direction: column; gap: 3px; padding-top: 1px; }
.card { background: #fafafa; border: 1px solid #e0e0e0; }
.card h3 { padding: 2px 3px; color: #666; }
.pages { height: 32px; }
.filters { height: 42px; }
.marks { position: relative; }
.marks h3 { height: 14px; border-bottom: 1px solid #e4e4e4; }
.all { height: 18px; display: flex; align-items: center; gap: 6px; padding-left: 6px; font-weight: 700; font-size: 8px; color: #222; border-bottom: 1px solid #e4e4e4; }
.all .ic, .agg .ic { width: 7px; height: 7px; color: #888; }
.type { display: flex; align-items: center; height: 12px; margin: 2px 3px; border: 1px solid #ddd; background: #fff; color: #777; }
.type .ic { width: 6px; height: 6px; margin: 0 4px 0 7px; }
.type select { flex: 1; height: 10px; border-right: 1px solid #ddd; }
.type .caret { margin: 0 2px; }
.props { display: grid; grid-template-columns: repeat(3, 1fr); gap: 3px; padding: 0 3px; }
.props button { height: 23px; border: 1px solid #ddd; background: #fff; display: flex; flex-direction: column; align-items: center; padding-top: 3px; font-size: 6px; line-height: 9px; color: #555; }
.props .ic { width: 8px; height: 8px; }
.pills { height: 45px; padding: 3px 5px 0 6px; overflow: hidden; border-bottom: 1px solid #e4e4e4; }
.pills li { display: flex; align-items: center; gap: 4px; height: 12px; color: #666; }
.pills .ic { width: 7px; height: 7px; }
.pills span { flex: 1; height: 10px; line-height: 10px; border-radius: 5px; background: #09b083; color: #e5fff6; padding-left: 5px; white-space: nowrap; }
.pills .gray span { background: #cfcfcf; color: #444; }
.agg { display: flex; align-items: center; gap: 6px; height: 17px; padding-left: 6px; }
.agg + .agg { border-top: 1px solid #eee; height: 16px; }
.spin { position: absolute; right: 3px; bottom: 33px; width: 6px; background: #d6d6d6; }
.spin .up { transform: scaleY(-1); }

.title-card { width: 82px; margin: 1px 0 0 2px; flex: none; }
.title-card h3 { height: 15px; padding: 2px 3px; background: #fcfcfc; border: 1px solid #e8e8e8; color: #666; }
.title-card p { height: 64px; background: #555500; font: 11px/15px "Open Sans", sans-serif; color: #3c3c12; text-align: center; padding-top: 1px; border: 1px solid #77773a; white-space: nowrap; }

.view { flex: 1; min-width: 0; margin: 1px 4px 4px 3px; display: flex; flex-direction: column; gap: 3px; }
.shelf { height: 14px; background: #fafafa; border: 1px solid #e4e4e4; display: flex; align-items: center; gap: 1px; }
.shelf h3 { width: 65px; border-right: 1px solid #ddd; display: flex; align-items: center; gap: 4px; padding-left: 4px; height: 12px; color: #666; }
.shelf .ic { width: 7px; height: 7px; }
.pill { width: 78px; height: 11px; background: #09b083; color: #e5fff6; padding-left: 6px; }
.round { border-radius: 6px 0 0 6px; }
.end { border-radius: 0 6px 6px 0; }
.viz { flex: 1; margin-top: 2px; background: #555500; display: flex; flex-direction: column; padding: 4px 5px; }
.axis { height: 30px; border: 1px solid #77773a; border-width: 0 0 1px 1px; display: flex; flex-direction: column; align-items: center; color: #34340f; padding-top: 3px; }
.axis small { font-size: 6px; color: #77773a; }
.axis.low { border-width: 1px 1px 0 0; padding-top: 15px; }
.plot { flex: 1; display: grid; place-items: center; background: repeating-linear-gradient(#94946a 0 3px, #555500 3px 4px) center / 1px 100% no-repeat; }
.plot svg { width: 220px; height: 225px; display: block; }
.slices circle { fill: none; stroke-width: 59; }
.slices { transform: rotate(-90deg); transform-origin: 110px 112px; }
.labels text { font-size: 7px; fill: #dcdcc4; text-anchor: middle; }
.labels .total { fill: #222; }

.legend { width: 81px; margin: 1px 3px 4px 0; flex: none; display: flex; flex-direction: column; justify-content: flex-end; gap: 4px; }
.keys { flex: 1; background: #555500; color: #ccc; display: flex; align-items: flex-end; gap: 4px; padding-left: 2px; font-size: 6px; line-height: 8px; overflow: hidden; }
.keys span { width: 7px; height: 5px; background: #76b7b2; }
.sum { background: #fafafa; }
.sum h3 { height: 14px; padding: 2px 4px; white-space: nowrap; }
.sum div { border: 2px solid #6b6b22; background: #d6d6d6; color: #f4f4f4; text-align: right; line-height: 8px; padding-right: 2px; }

.showme { position: absolute; top: 0; right: 2px; width: 108px; background: #fafafa; border: 1px solid #ddd; border-top: 0; box-shadow: 1px 1px 3px #999; padding: 8px 5px 7px 7px; }
.thumbs { display: grid; grid-template-columns: repeat(3, 1fr); grid-auto-rows: 1fr; gap: 2px; height: 194px; margin-bottom: 6px; }
.thumbs button { border: 1px solid #e4e4e4; background: #fff; min-height: 0; overflow: hidden; display: grid; }
.thumbs button.picked { border-color: #c97a4a; }
.thumbs svg { width: 100%; height: 100%; min-height: 0; display: block; }
.try b { color: #222; }
.need { display: flex; align-items: center; height: 15px; gap: 3px; }
.need .ic { width: 7px; height: 7px; }
.dim { background: #4a97b1; color: #e4f4fa; border-radius: 6px; padding: 0 5px; height: 11px; }
.mea { background: #09b083; }
.note { color: #888; line-height: 8px; padding-top: 6px; white-space: nowrap; }

.sheets { height: 6px; flex: none; overflow: hidden; background: #e8e8e8; border-top: 1px solid #ccc; display: flex; line-height: 11px; }
.sheets span { width: 30px; padding: 0 3px; border-right: 1px solid #ccc; white-space: nowrap; color: #777; }
.sheets .wide { width: 69px; }
.sheets .cur { background: #fff; }

.taskbar { height: 20px; flex: none; background: #303030; display: flex; align-items: center; color: #eee; }
.taskbar svg { display: block; }
.start { width: 25px; display: grid; place-items: center; }
.start svg { width: 9px; height: 9px; }
.find { width: 182px; height: 20px; background: #f0f0f0; display: flex; align-items: center; padding: 0 5px; gap: 5px; color: #333; }
.find svg { width: 12px; height: 12px; }
.find .mic { width: 11px; }
.find input { flex: 1; font-size: 8px; }
.find input::placeholder { color: #444; }
.apps { flex: 1; display: flex; height: 20px; }
.apps button { flex: 1; display: grid; place-items: center; border-bottom: 1px solid transparent; }
.apps svg { width: 13px; height: 13px; }
.apps .run { border-color: #6f9dbd; }
.apps .focus { background: #555; border-color: #6f9dbd; }
.apps .alert { background: #b4662e; }
.tray { display: flex; align-items: center; gap: 4px; padding-left: 3px; }
.tray svg { width: 9px; height: 9px; fill: none; stroke: #ddd; }
.taskbar time { width: 46px; font-size: 6px; line-height: 9px; display: flex; flex-direction: column; align-items: center; }
.notes { width: 23px; padding-left: 2px; }
.notes svg { width: 14px; height: 14px; }
```
